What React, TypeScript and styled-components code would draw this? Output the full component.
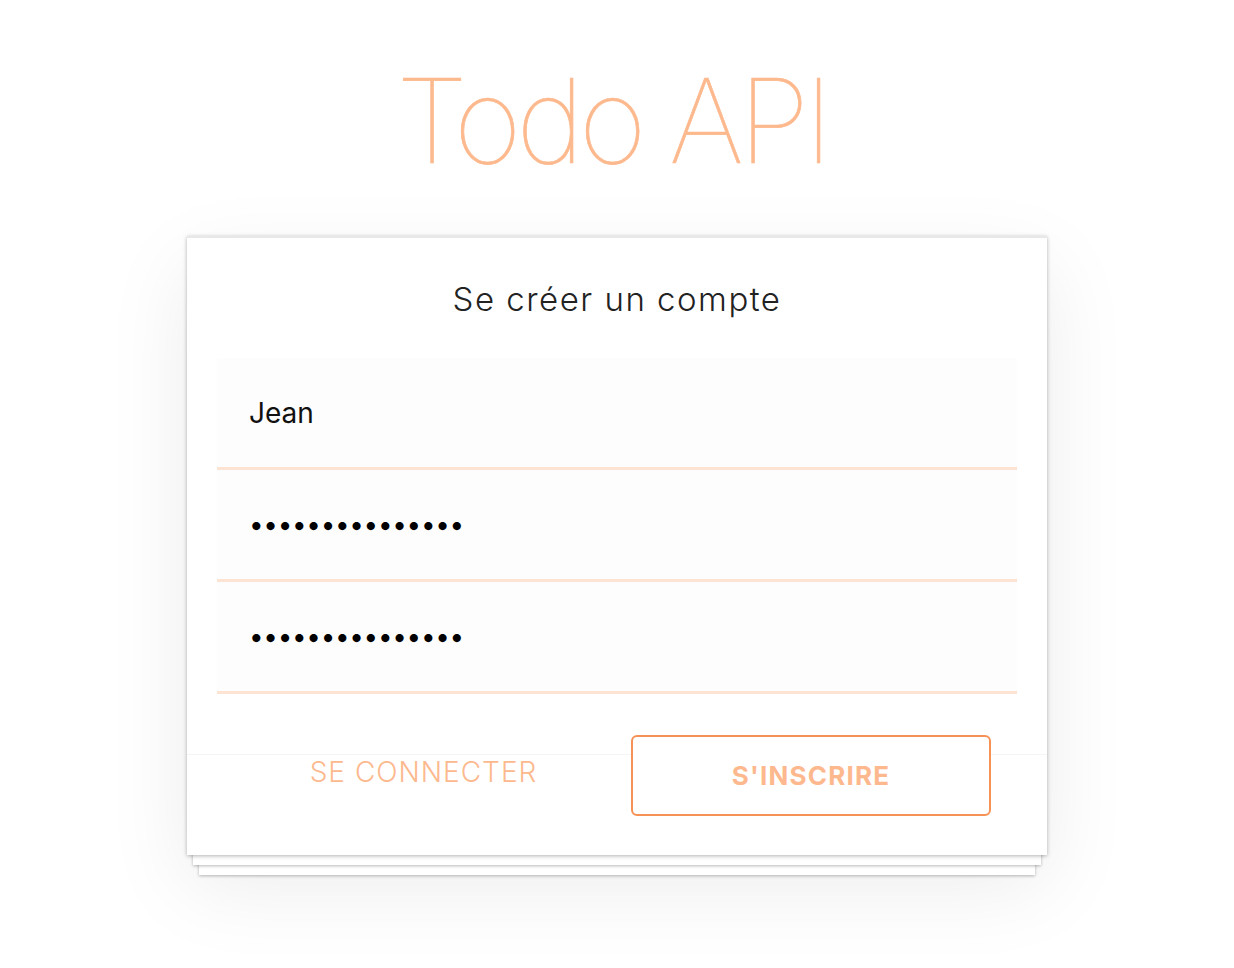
import React from "react";
import styled, { createGlobalStyle } from "styled-components";

const Global = createGlobalStyle`
  html, body { margin: 0; padding: 0; background: #ffffff; }
  body { font-family: Inter, "Noto Sans", sans-serif; }
  * { box-sizing: border-box; }
`;

const Page = styled.div`
  width: 1234px;
  min-height: 968px;
  display: flex;
  flex-direction: column;
  align-items: center;
  padding-top: 51px;
`;

const Title = styled.h1`
  margin: 0 0 0 -10px;
  font-family: Inter, "Open Sans", sans-serif;
  font-weight: 100;
  font-size: 117px;
  line-height: 140px;
  color: #fdb98e;
  -webkit-text-stroke: 0.7px #fdb98e;
  letter-spacing: -5.3px;
`;

const Stack = styled.div`
  position: relative;
  margin-top: 45px;
  width: 860px;
  box-shadow: 0 30px 80px rgba(0, 0, 0, 0.08);
`;

const Layer = styled.div<{ $inset: number; $drop: number }>`
  position: absolute;
  left: ${(p) => p.$inset}px;
  right: ${(p) => p.$inset}px;
  bottom: -${(p) => p.$drop}px;
  height: 40px;
  background: #fff;
  box-shadow: 0 1px 3px rgba(0, 0, 0, 0.28);
`;

const Card = styled.div`
  position: relative;
  background: #fff;
  border-top: 2px solid #e8e8e8;
  box-shadow: 0 1px 4px rgba(0, 0, 0, 0.3);
  display: flex;
  flex-direction: column;
`;

const Heading = styled.h2`
  margin: 0;
  padding-top: 41px;
  text-align: center;
  font-family: Inter, sans-serif;
  font-weight: 300;
  font-size: 33px;
  line-height: 40px;
  color: #222;
  letter-spacing: 1.5px;
`;

const Fields = styled.div`
  display: flex;
  flex-direction: column;
  padding: 39px 30px 0;
`;

const Field = styled.input`
  display: block;
  width: 100%;
  height: 112px;
  border: none;
  border-bottom: 3px solid #fde3d3;
  background: #fdfdfd;
  padding: 0 32px;
  font-family: Inter, sans-serif;
  font-size: 28px;
  color: #111;
  outline: none;
  &[type="password"] {
    letter-spacing: -0.3px;
    font-size: 26px;
    color: #000;
  }
`;

const Footer = styled.div`
  margin-top: 60px;
  border-top: 1px solid #f5f5f5;
  height: 101px;
  display: grid;
  grid-template-columns: 430px 430px;
`;

const LinkTab = styled.div`
  text-align: center;
  padding: 1px 0 0 43px;
  font-family: Inter, sans-serif;
  font-weight: 300;
  font-size: 28px;
  line-height: 32px;
  letter-spacing: 1px;
  color: #fdb98e;
`;

const Primary = styled.button`
  margin: -20px 0 0 14px;
  width: 360px;
  height: 81px;
  border: 2px solid #f69256;
  border-radius: 6px;
  background: #fff;
  font-family: Inter, sans-serif;
  font-weight: 700;
  font-size: 26px;
  letter-spacing: 1.2px;
  color: #fdb88e;
  cursor: pointer;
`;

export default function App() {
  return (
    <>
      <Global />
      <Page>
        <Title>Todo API</Title>
        <Stack>
          <Layer $inset={12} $drop={20} />
          <Layer $inset={6} $drop={10} />
          <Card>
            <Heading>Se créer un compte</Heading>
            <Fields>
              <Field type="text" defaultValue="Jean" />
              <Field type="password" defaultValue="motdepasse12345" />
              <Field type="password" defaultValue="motdepasse12345" />
            </Fields>
            <Footer>
              <LinkTab>SE CONNECTER</LinkTab>
              <div>
                <Primary>S'INSCRIRE</Primary>
              </div>
            </Footer>
          </Card>
        </Stack>
      </Page>
    </>
  );
}
